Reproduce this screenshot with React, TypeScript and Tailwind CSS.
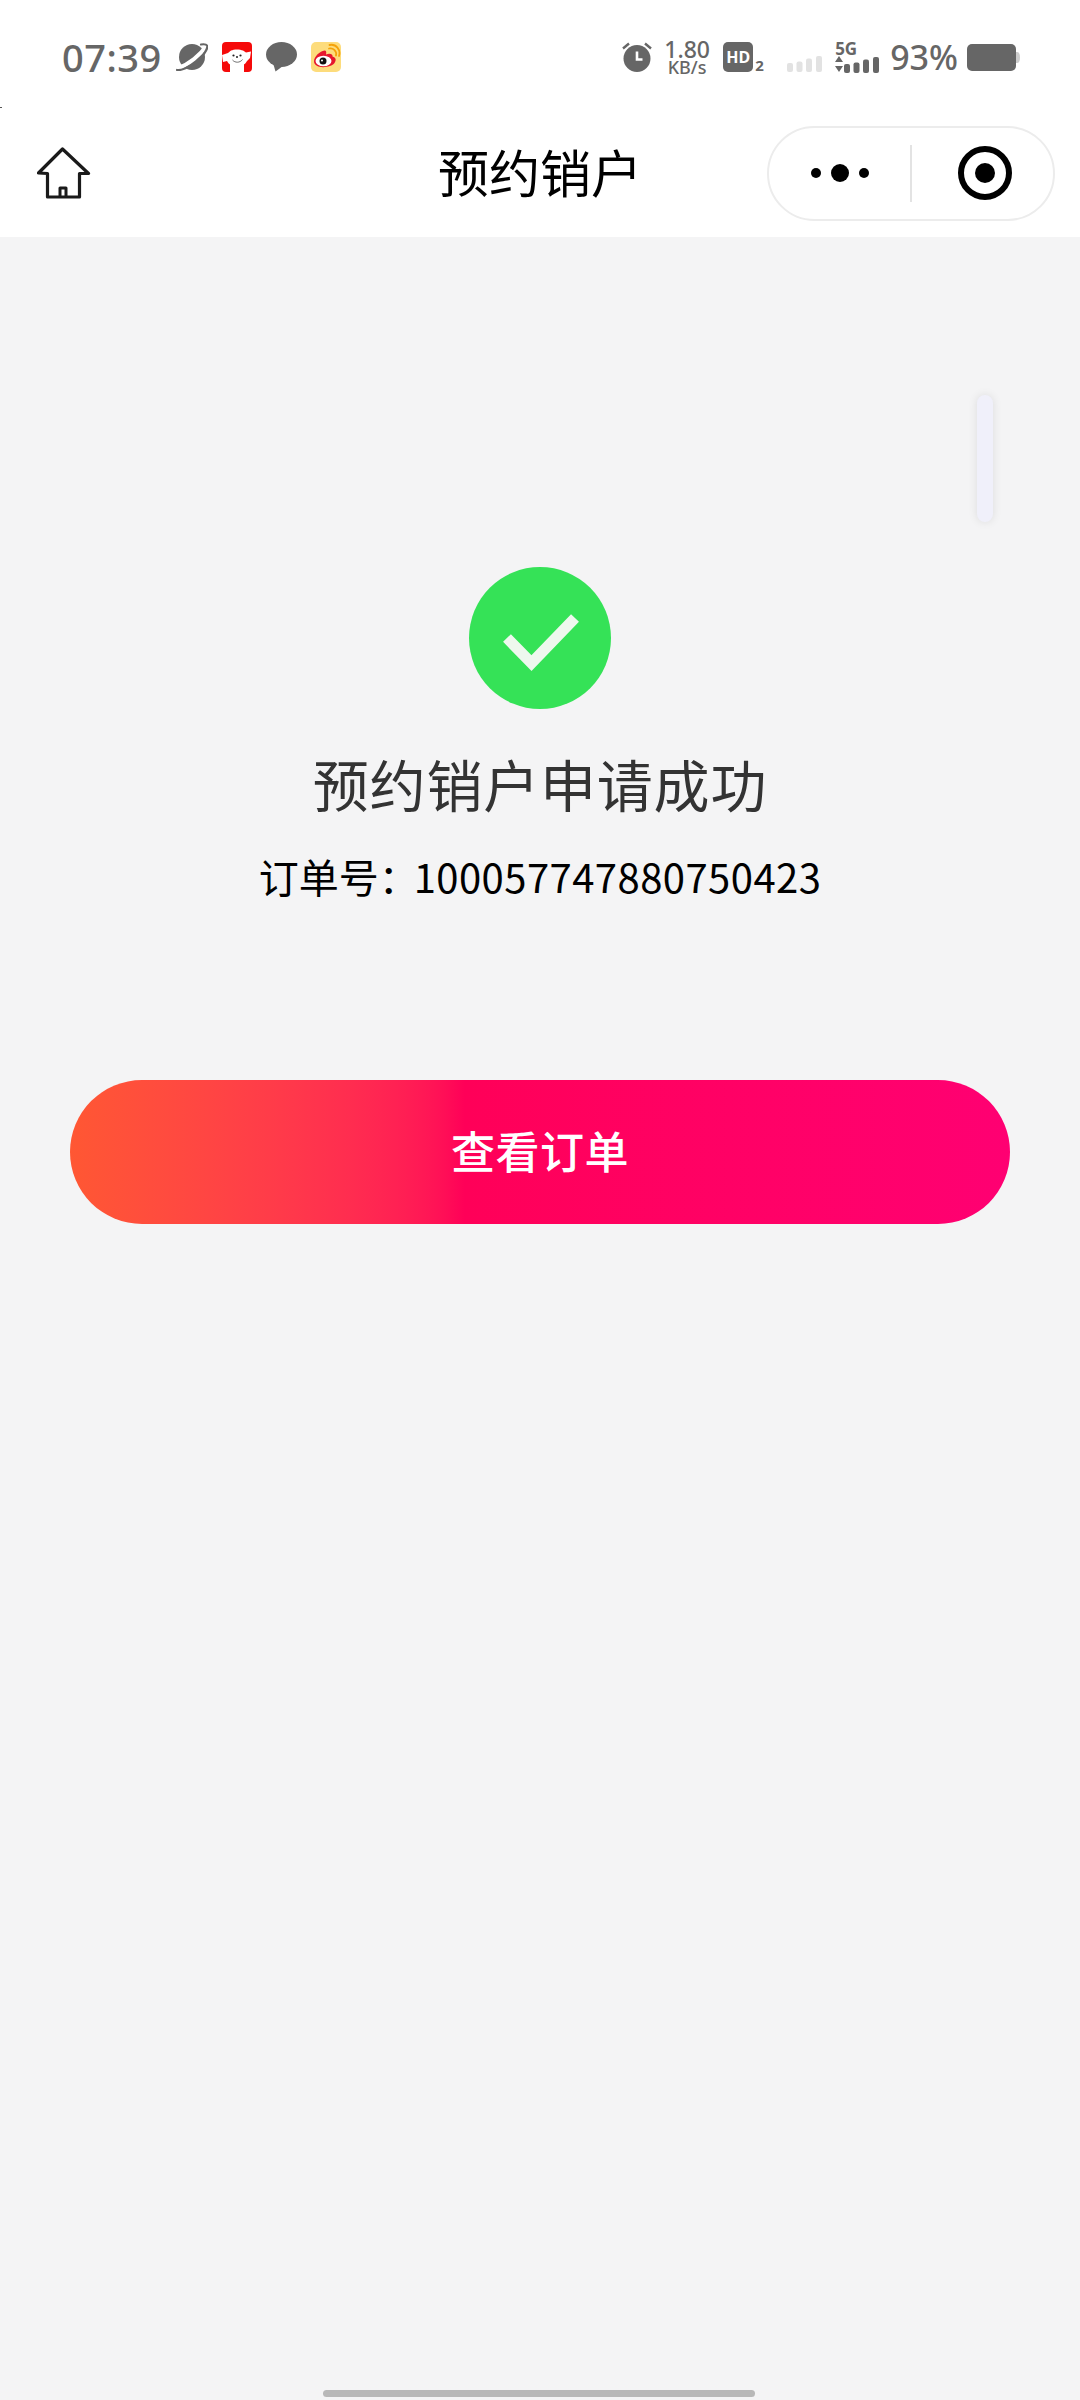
import React from 'react';

const FONT = '[font-family:"Noto_Sans_CJK_SC","Noto_Sans",sans-serif]';

/** 状态栏左侧通知图标 */
function PlanetIcon() {
  return (
    <svg width="32" height="28" viewBox="0 0 32 28" fill="none">
      <circle cx="16" cy="14" r="13" fill="#666" />
      <path d="M0 26C6 24 13 20 18 16C23 12 27 8 31 2" stroke="#fff" strokeWidth="4" />
      <path d="M1 27C4 28 14 24 21 18.500C27 13.500 31 7 31.500 3.500C31 1.500 28 1 25 1.500" stroke="#666" strokeWidth="2.200" strokeLinecap="round" />
    </svg>
  );
}

function JdIcon() {
  return (
    <svg width="30" height="30" viewBox="0 0 30 30">
      <rect width="30" height="30" rx="4" fill="#f50a0a" />
      <path d="M0 13L6 11L9 8.500C12 7 18 7 21 8.500L24 10.500L29 9.500L28 16L25 19C23 23 20 24 15 24C10 24 7 23 5 19L1 20Z" fill="#fff" />
      <path d="M8 22H22V30H8Z" fill="#fff" />
      <circle cx="11.500" cy="13.500" r="1.100" fill="#222" />
      <circle cx="18.500" cy="13.500" r="1.100" fill="#222" />
      <circle cx="15" cy="15" r="1" fill="#222" />
      <path d="M10.500 18C13 21 18 21 20.500 17.500" stroke="#333" strokeWidth="0.700" fill="none" />
    </svg>
  );
}

function BubbleIcon() {
  return (
    <svg width="31" height="30" viewBox="0 0 31 30">
      <ellipse cx="15.500" cy="12.500" rx="15.500" ry="12.500" fill="#666" />
      <path d="M7 21L9.500 29.500L17 24Z" fill="#666" />
    </svg>
  );
}

function WeiboIcon() {
  return (
    <svg width="30" height="30" viewBox="0 0 30 30">
      <rect width="30" height="30" rx="5" fill="#fddc7c" />
      <path d="M3 19.500C3 14.500 9 9 13.500 8.500C15.500 8.500 15.500 10.500 15 12.500C18 11 22 11.500 21.500 14.500C25 15.500 25.500 18 23.500 21C20 26 3.500 27.500 3 19.500Z" fill="#e6162d" />
      <ellipse cx="12.500" cy="19" rx="8" ry="5.300" fill="#fff" />
      <circle cx="12" cy="19" r="3.500" fill="#111" />
      <circle cx="11" cy="18.500" r="1" fill="#fff" />
      <path d="M18 6.500C22 5.500 26 9 25 13.500" stroke="#f5a20a" strokeWidth="1.800" fill="none" strokeLinecap="round" />
      <path d="M18.500 3C25 1.500 30 8 28 14" stroke="#f5a20a" strokeWidth="1.800" fill="none" strokeLinecap="round" />
    </svg>
  );
}

/** 状态栏右侧系统图标 */
function AlarmIcon() {
  return (
    <svg width="30" height="30" viewBox="0 0 30 30">
      <circle cx="15" cy="16.500" r="13.500" fill="#666" />
      <path d="M15 9.500V17.500H20.500" stroke="#fff" strokeWidth="2.600" fill="none" />
      <path d="M1 6.500L7 1.500M29 6.500L23 1.500" stroke="#666" strokeWidth="2.400" />
    </svg>
  );
}

function SignalBars({ color }: { color: string }) {
  return (
    <svg width="35" height="16" viewBox="0 0 35 16" fill={color}>
      <rect x="0" y="7" width="6" height="9" rx="2" />
      <rect x="9.500" y="5.500" width="6" height="10.500" rx="2" />
      <rect x="19" y="2.500" width="6" height="13.500" rx="2" />
      <rect x="29" y="0" width="6" height="16" rx="2" />
    </svg>
  );
}

function BatteryIcon() {
  return (
    <svg width="53" height="27" viewBox="0 0 53 27">
      <rect x="0" y="0" width="49" height="27" rx="5" fill="#666" />
      <path d="M49 8H50C52 8 53 10 53 13.500C53 17 52 19 50 19H49Z" fill="#ccc" />
    </svg>
  );
}

function HomeIcon() {
  return (
    <svg width="54" height="52" viewBox="0 0 54 52" fill="none" stroke="#1a1a1a" strokeWidth="3.200" strokeLinejoin="round">
      <path d="M2 26L26 2L52 26.500H43V50H11V26.500Z" transform="translate(-0.500 0)" />
      <path d="M23 50V41H29V50" strokeWidth="3" />
    </svg>
  );
}

export default function App() {
  return (
    <div className={`relative flex h-[2400px] w-full flex-col overflow-hidden bg-[#f4f4f5] ${FONT}`}>
      {/* 顶部白色区域：状态栏 + 导航栏 */}
      <header className="bg-white pb-[5px]">
        <div className="flex h-[114px] items-center justify-between pl-[62px] pr-[60px] text-[#666]">
          <div className="flex items-center">
            <span className="w-[98px] font-['Noto_Sans'] text-[38px] font-medium leading-none tracking-[0.5px]">07:39</span>
            <div className="ml-[16px] flex items-center gap-[14px]">
              <PlanetIcon />
              <JdIcon />
              <BubbleIcon />
              <WeiboIcon />
            </div>
          </div>
          <div className="flex items-center">
            <AlarmIcon />
            <div className="ml-[12px] flex w-[46px] flex-col items-center font-['Noto_Sans'] font-medium">
              <span className="text-[23px] leading-[20px]">1.80</span>
              <span className="text-[18px] leading-[16px]">KB/s</span>
            </div>
            <div className="ml-[13px] flex h-[30px] w-[30px] items-center justify-center rounded-[5px] bg-[#666] font-['Noto_Sans'] text-[16px] font-bold leading-none text-white">HD</div>
            <span className="mt-[16px] w-[13px] text-center font-['Noto_Sans'] text-[15px] font-bold leading-none">2</span>
            <div className="ml-[21px] mt-[14px]"><SignalBars color="#e2e2e2" /></div>
            <div className="relative ml-[13px] flex h-[30px] w-[44px] flex-col">
              <span className="font-['Noto_Sans'] text-[17px] font-bold leading-[14px]">5G</span>
              <div className="mt-px flex justify-end">
                <SignalBars color="#666" />
              </div>
              <svg className="absolute bottom-0 left-0" width="8" height="16" viewBox="0 0 8 16" fill="#666">
                <path d="M4 0L8 6H0ZM0 10H8L4 16Z" />
              </svg>
            </div>
            <span className="ml-[11px] font-['Noto_Sans'] text-[34px] font-medium leading-none">93%</span>
            <div className="ml-[9px]"><BatteryIcon /></div>
          </div>
        </div>

        <nav className="grid h-[118px] grid-cols-[1fr_auto_1fr] items-center">
          <div className="pl-[37px]"><HomeIcon /></div>
          <h1 className="-mt-[4px] text-[51px] font-normal leading-none text-black">预约销户</h1>
          <div className="flex justify-end pr-[25px]">
            <div className="flex h-[95px] w-[288px] items-center rounded-full border-2 border-[#ececec]">
              <div className="flex w-[141px] items-center justify-center gap-[10px]">
                <span className="h-[10px] w-[10px] rounded-full bg-black" />
                <span className="h-[18px] w-[18px] rounded-full bg-black" />
                <span className="h-[10px] w-[10px] rounded-full bg-black" />
              </div>
              <div className="h-[57px] w-[2px] bg-[#e3e3e3]" />
              <div className="flex flex-1 items-center justify-center pl-[5px]">
                <div className="flex h-[54px] w-[54px] items-center justify-center rounded-full border-[6px] border-black">
                  <span className="h-[20px] w-[20px] rounded-full bg-black" />
                </div>
              </div>
            </div>
          </div>
        </nav>
      </header>

      {/* 结果内容 */}
      <main className="flex flex-col items-center px-[70px] pt-[330px]">
        <div className="mr-[1px] flex h-[142px] w-[142px] items-center justify-center rounded-full bg-[#35e257]">
          <svg width="142" height="142" viewBox="0 0 142 142" fill="none">
            <path d="M38 71L62.500 96L106 51" stroke="#eef8ee" strokeWidth="11" />
          </svg>
        </div>
        <h2 className="mt-[38px] text-[56px] font-normal leading-[72px] tracking-[0.8px] text-[#333]">预约销户申请成功</h2>
        <p className="mt-[29px] text-[40px] leading-[56px] text-black">订单号：<span className="-ml-[5px] tracking-[0.45px]">100057747880750423</span></p>
        <button className="mt-[176px] flex h-[144px] w-full items-center justify-center rounded-full bg-gradient-to-r from-[#ff5733] via-[#ff0058] via-[42%] to-[#ff0072] pb-[4px] text-[44px] font-medium leading-none tracking-[0.5px] text-white">
          查看订单
        </button>
      </main>

      {/* 悬浮滚动条 */}
      <div className="absolute left-[977px] top-[395px] h-[127px] w-[16px] rounded-full bg-[#f0f0fa] shadow-[0_0_10px_rgba(0,0,0,0.1)]" />
      {/* 左侧边缘的小点 */}
      <div className="absolute left-0 top-[107px] h-px w-[2px] bg-[#555]" />
      {/* 底部手势条 */}
      <div className="absolute bottom-[3px] left-[323px] h-[7px] w-[432px] rounded-full bg-[#b8b8b8]" />
    </div>
  );
}
